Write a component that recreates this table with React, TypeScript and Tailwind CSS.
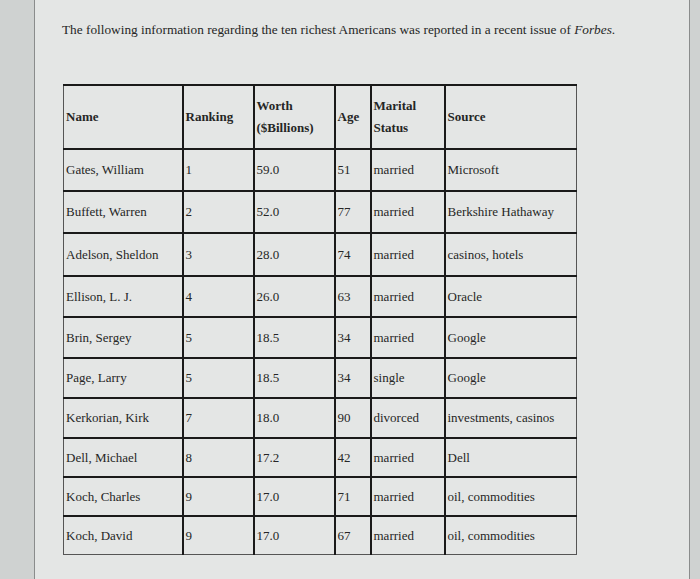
const rows = [
  { name: "Gates, William", rank: "1", worth: "59.0", age: "51", status: "married", source: "Microsoft", h: "h-[42px]" },
  { name: "Buffett, Warren", rank: "2", worth: "52.0", age: "77", status: "married", source: "Berkshire Hathaway", h: "h-[42px]" },
  { name: "Adelson, Sheldon", rank: "3", worth: "28.0", age: "74", status: "married", source: "casinos, hotels", h: "h-[43px]" },
  { name: "Ellison, L. J.", rank: "4", worth: "26.0", age: "63", status: "married", source: "Oracle", h: "h-[41px]" },
  { name: "Brin, Sergey", rank: "5", worth: "18.5", age: "34", status: "married", source: "Google", h: "h-[41px]" },
  { name: "Page, Larry", rank: "5", worth: "18.5", age: "34", status: "single", source: "Google", h: "h-[40px]" },
  { name: "Kerkorian, Kirk", rank: "7", worth: "18.0", age: "90", status: "divorced", source: "investments, casinos", h: "h-[40px]" },
  { name: "Dell, Michael", rank: "8", worth: "17.2", age: "42", status: "married", source: "Dell", h: "h-[39px]" },
  { name: "Koch, Charles", rank: "9", worth: "17.0", age: "71", status: "married", source: "oil, commodities", h: "h-[39px]" },
  { name: "Koch, David", rank: "9", worth: "17.0", age: "67", status: "married", source: "oil, commodities", h: "h-[38px]" },
]

// inner grid lines are heavy, the outer frame is a thin grey line
const td = "border-2 border-[#1a1a1a] px-[2px] align-middle first:border-l first:border-l-[#555] last:border-r last:border-r-[#555]"

const App = () => {
  return (
    <div
      className="flex h-[579px] w-[700px] overflow-hidden bg-[#cfd2d1] pl-[34px] pr-[10px] text-[13px] text-[#262626]"
      style={{ fontFamily: '"Liberation Serif", "Times New Roman", serif' }}
    >
      <div className="flex-1 border-x border-[#8a8c8c] bg-[#e4e6e5] pl-[27px] pt-[21px]">
        <p className="text-[13.3px] leading-[18px]">
          The following information regarding the ten richest Americans was reported in a recent issue of <i>Forbes</i>.
        </p>

        <table className="mt-[45px] ml-[1px] border-collapse border border-[#555] text-left">
          <thead>
            <tr className="h-[64px] font-bold leading-[22px]">
              <th className={`${td} w-[119px]`}>Name</th>
              <th className={`${td} w-[71px]`}>Ranking</th>
              <th className={`${td} w-[81px]`}>Worth<br />($Billions)</th>
              <th className={`${td} w-[36px]`}>Age</th>
              <th className={`${td} w-[74px]`}>Marital<br />Status</th>
              <th className={`${td} w-[132px]`}>Source</th>
            </tr>
          </thead>
          <tbody>
            {rows.map((r, i) => (
              <tr
                key={r.name}
                className={`${r.h} ${i === rows.length - 1 ? "[&>td]:border-b [&>td]:border-b-[#555]" : ""}`}
              >
                <td className={td}>{r.name}</td>
                <td className={td}>{r.rank}</td>
                <td className={td}>{r.worth}</td>
                <td className={td}>{r.age}</td>
                <td className={td}>{r.status}</td>
                <td className={td}>{r.source}</td>
              </tr>
            ))}
          </tbody>
        </table>
      </div>
    </div>
  )
}

export default App
